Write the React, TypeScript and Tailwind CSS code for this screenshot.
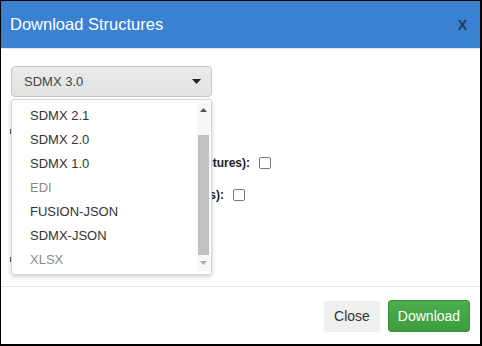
import React from "react";

const items: { label: string; muted?: boolean }[] = [
  { label: "SDMX 2.1" },
  { label: "SDMX 2.0" },
  { label: "SDMX 1.0" },
  { label: "EDI", muted: true },
  { label: "FUSION-JSON" },
  { label: "SDMX-JSON" },
  { label: "XLSX", muted: true },
];

export default function App() {
  return (
    <div
      className="w-[482px] h-[346px] bg-black pt-[1px] pl-[1px] pr-[2px] pb-[2px]"
      style={{ fontFamily: '"Liberation Sans", Arial, sans-serif' }}
    >
      <div className="w-full h-full bg-white flex flex-col">
        {/* header */}
        <div className="h-[48px] bg-[#3a82d1] flex items-center justify-between pl-[9px] pr-[13px] border-b border-[#e5e5e5]">
          <span className="text-[16.5px] text-white leading-none">Download Structures</span>
          <span className="text-[14px] font-bold text-[#1d3b5a] leading-none">X</span>
        </div>

        {/* body */}
        <div className="relative flex-1 pl-[10px] pt-[17px]">
          <div className="w-[201px] h-[31px] rounded-[4px] border border-[#c4c4c4] bg-gradient-to-b from-[#ebebeb] to-[#e2e2e2] flex items-center justify-between pl-[12px] pr-[10px]">
            <span className="text-[13px] text-[#444]">SDMX 3.0</span>
            <svg width="9" height="5" viewBox="0 0 9 5">
              <path d="M0 0 L9 0 L4.5 5 Z" fill="#222" />
            </svg>
          </div>

          {/* form rows behind dropdown */}
          <div className="mt-[18px] flex flex-col">
            <div className="h-[32px] flex items-center">
              <span className="ml-[-1px] w-[1px] h-[5px] bg-[#555]" />
            </div>
            <div className="h-[32px] flex items-center">
              <div className="w-[239px] flex justify-end">
                <span className="shrink-0 whitespace-nowrap text-[12px] font-bold text-[#222]">
                  Include References (child structures):
                </span>
              </div>
              <span className="ml-[9px] w-[12px] h-[12px] rounded-[2px] border border-[#777] bg-white" />
            </div>
            <div className="h-[32px] flex items-center">
              <div className="w-[213px] flex justify-end">
                <span className="shrink-0 whitespace-nowrap text-[12px] font-bold text-[#222]">
                  Include Annotations (details):
                </span>
              </div>
              <span className="ml-[9px] w-[12px] h-[12px] rounded-[2px] border border-[#777] bg-white" />
            </div>
            <div className="h-[32px]" />
            <div className="h-[32px] flex items-center">
              <span className="ml-[-1px] w-[1px] h-[5px] bg-[#555]" />
            </div>
          </div>

          {/* dropdown list */}
          <div className="absolute left-[10px] top-[50px] w-[201px] h-[176px] bg-white border border-[#d6d6d6] rounded-[3px] shadow-[0_2px_5px_rgba(0,0,0,0.18)] flex">
            <div className="flex-1 pt-[4px]">
              {items.map((it) => (
                <div
                  key={it.label}
                  className={
                    "h-[24px] flex items-center pl-[18px] text-[13px] " +
                    (it.muted ? "text-[#8a8a8a]" : "text-[#333]")
                  }
                >
                  {it.label}
                </div>
              ))}
            </div>
            <div className="w-[13px] mr-[1px] my-[3px] flex flex-col items-center bg-[#f7f7f7]">
              <div className="h-[14px] flex items-center justify-center">
                <svg width="7" height="4" viewBox="0 0 7 4">
                  <path d="M0 4 L7 4 L3.5 0 Z" fill="#555" />
                </svg>
              </div>
              <div className="h-[18px]" />
              <div className="w-[11px] h-[120px] bg-[#c1c1c1]" />
              <div className="flex-1 flex items-center justify-center">
                <svg width="7" height="4" viewBox="0 0 7 4">
                  <path d="M0 0 L7 0 L3.5 4 Z" fill="#aaa" />
                </svg>
              </div>
            </div>
          </div>
        </div>

        {/* footer */}
        <div className="h-[58px] border-t border-[#e5e5e5] flex items-center justify-end gap-[8px] pr-[10px] pt-[1px]">
          <button className="w-[56px] h-[31px] rounded-[3px] bg-[#efefef] text-[14px] text-[#333]">
            Close
          </button>
          <button className="w-[82px] h-[32px] rounded-[3px] bg-gradient-to-b from-[#4cae4c] to-[#3d9c3d] border border-[#3a8f3a] text-[14px] text-white">
            Download
          </button>
        </div>
      </div>
    </div>
  );
}
